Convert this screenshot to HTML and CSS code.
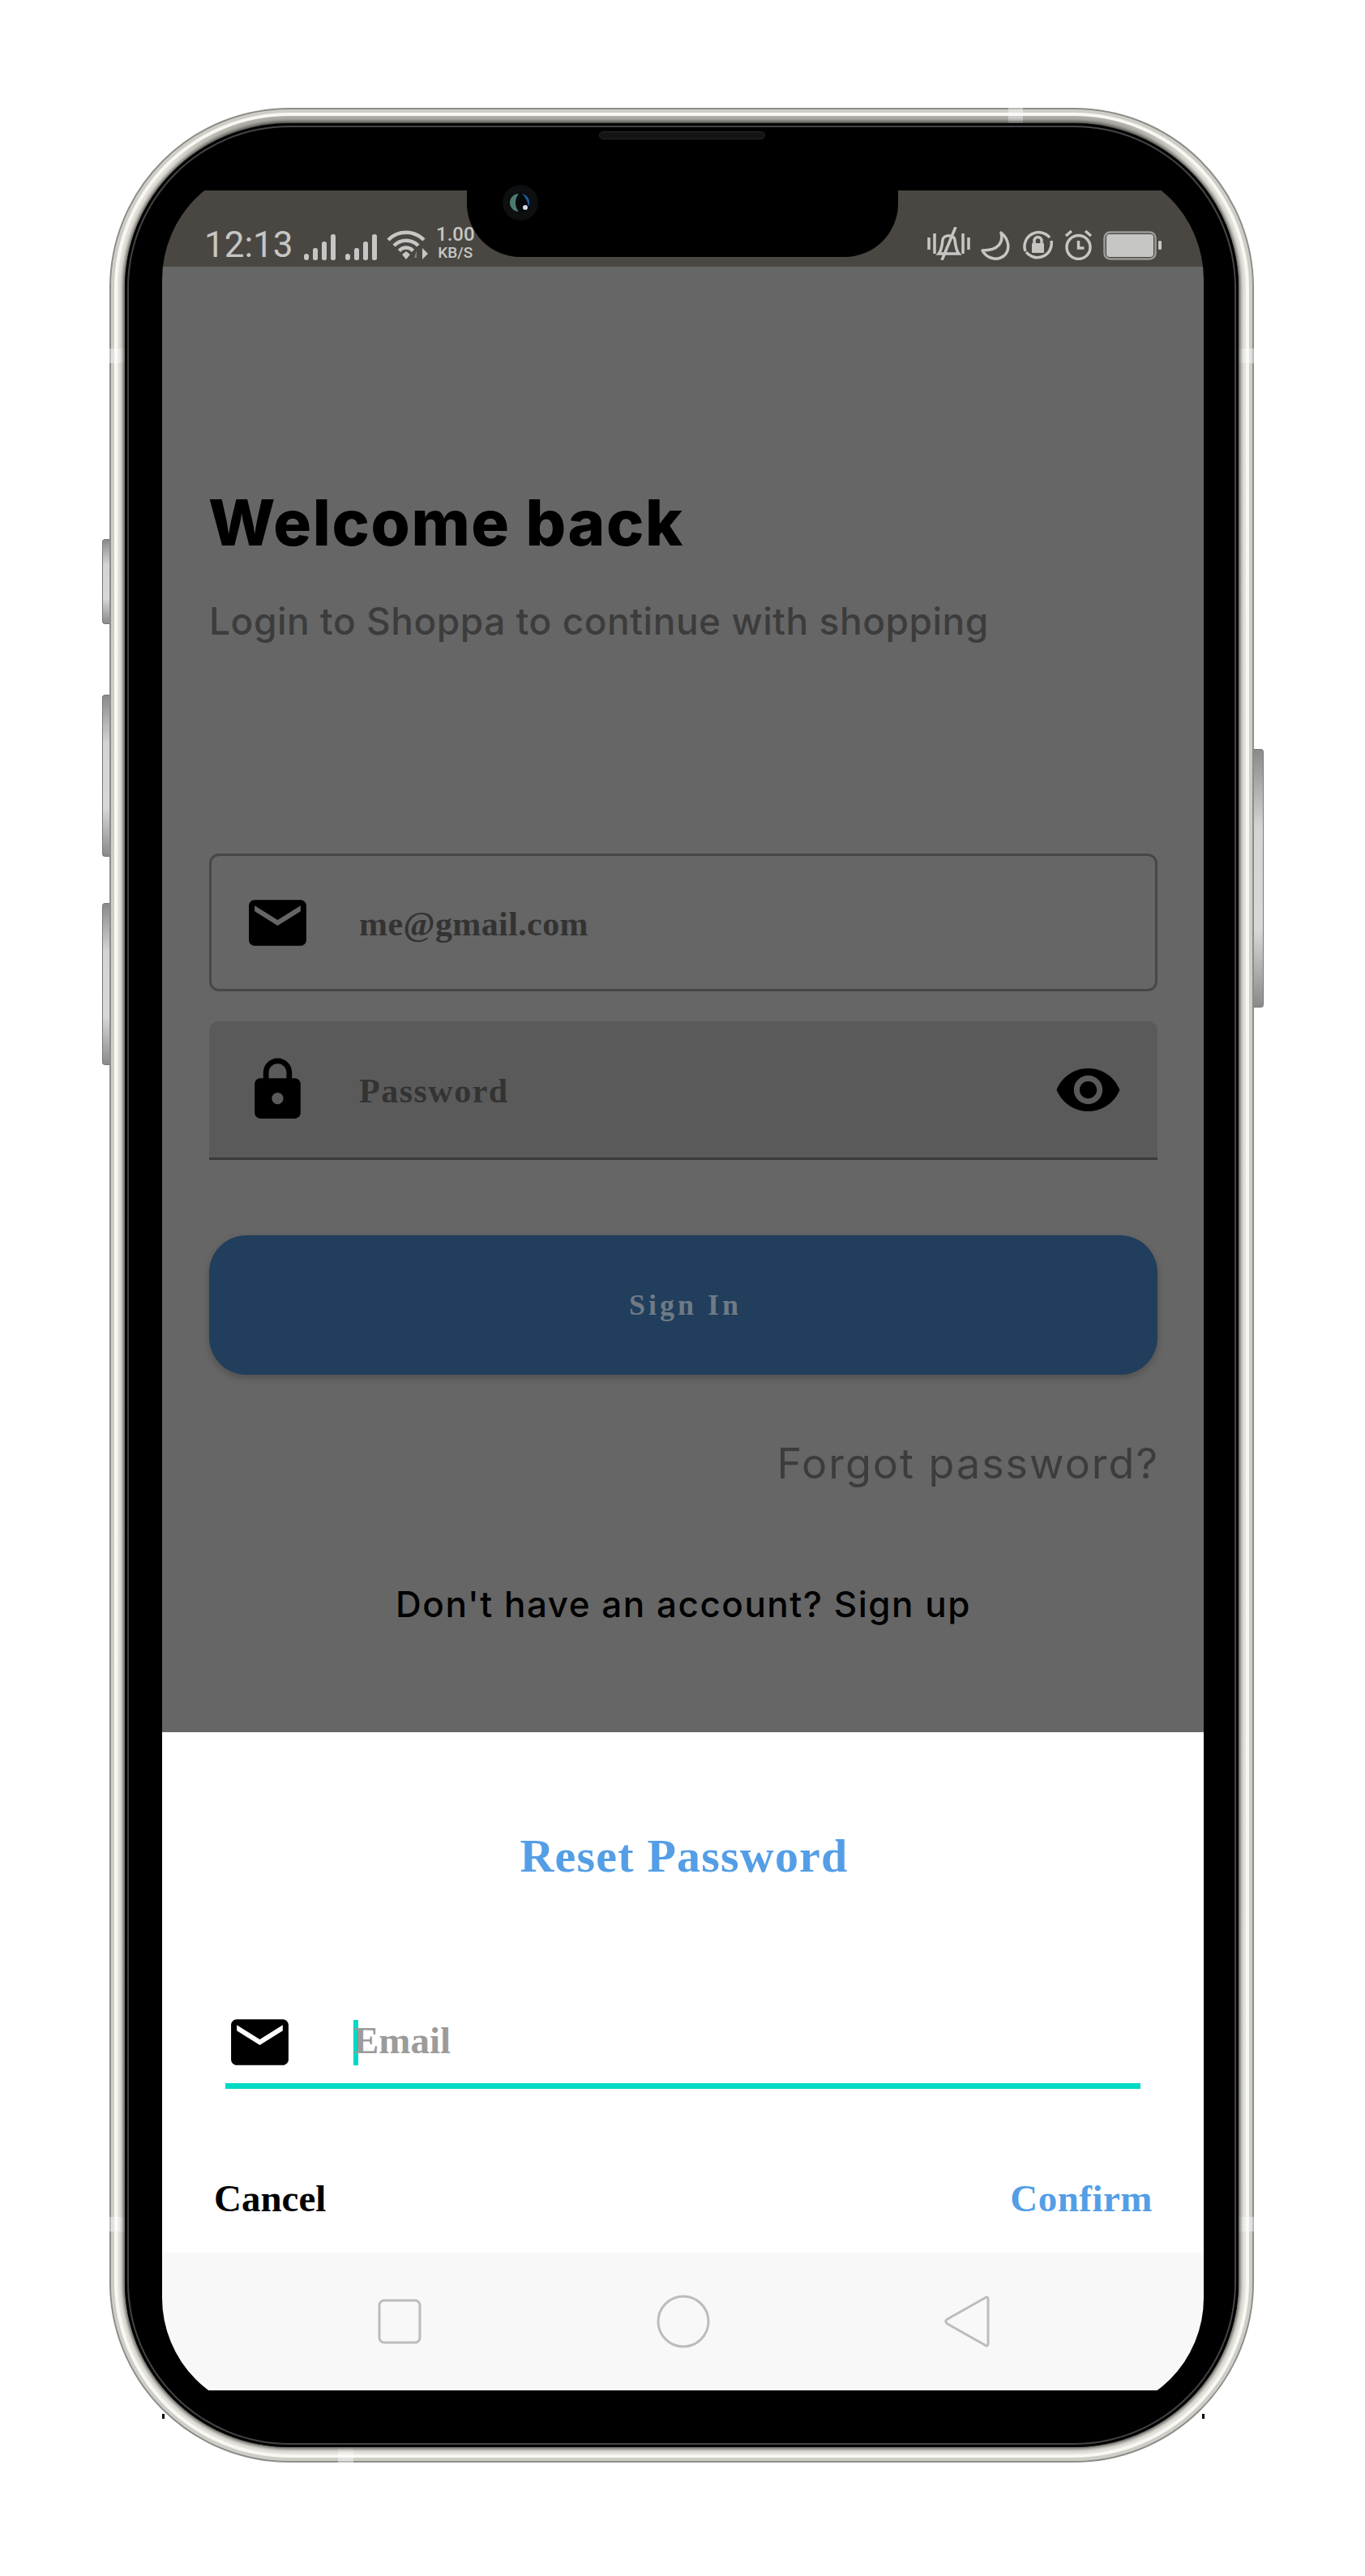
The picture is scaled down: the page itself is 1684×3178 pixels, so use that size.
FILE: index.html
```html
<!DOCTYPE html>
<html>
<head>
  <title>Welcome back</title>
  <link rel="stylesheet" href="styles.css">
</head>
<body>
  <div class="phone">
    <div class="side-btn left-one"></div>
    <div class="side-btn left-two"></div>
    <div class="side-btn left-three"></div>
    <div class="side-btn right-one"></div>

    <div class="band band-top"></div>
    <div class="band band-bottom"></div>
    <div class="band band-side side-l1"></div>
    <div class="band band-side side-r1"></div>
    <div class="band band-side side-l2"></div>
    <div class="band band-side side-r2"></div>

    <div class="speck speck-left"></div>
    <div class="speck speck-right"></div>

    <div class="bezel">
      <div class="speaker"></div>
      <div class="screen">
        <div class="notch">
          <svg class="camera" width="44" height="44" viewBox="0 0 44 44">
            <circle cx="22" cy="22" r="22" fill="#0e0f10"/>
            <circle cx="22" cy="22" r="12" fill="#06090c"/>
            <path d="M20 11a11 11 0 0 0 0 22c-3-4-4-7-4-11s1-7 4-11z" fill="#4d7a70"/>
            <path d="M24 11a11 11 0 0 1 8 16c-1-6-3-11-8-16z" fill="#1d5a94"/>
            <circle cx="28" cy="28" r="3" fill="#d5d8e8"/>
          </svg>
        </div>

        <div class="status-bar">
          <div class="status-group">
            <span class="clock">12:13</span>
            <svg width="39" height="32" viewBox="0 0 39 32"><g fill="#c6c6c4"><rect x="0" y="24" width="6" height="8" rx="3"/><rect x="11" y="17" width="6" height="15" rx="2.5"/><rect x="22" y="9" width="6" height="23" rx="2.5"/><rect x="33" y="0" width="6" height="32" rx="2.5"/></g></svg>
            <svg width="39" height="32" viewBox="0 0 39 32"><g fill="#c6c6c4"><rect x="0" y="24" width="6" height="8" rx="3"/><rect x="11" y="17" width="6" height="15" rx="2.5"/><rect x="22" y="9" width="6" height="23" rx="2.5"/><rect x="33" y="0" width="6" height="32" rx="2.5"/></g></svg>
            <svg width="52" height="38" viewBox="0 0 52 38"><g fill="none" stroke="#c6c6c4" stroke-width="4.500"><path d="M2 13A31 31 0 0 1 46 13"/><path d="M9 20A21 21 0 0 1 39 20"/><path d="M15.500 26.500A11 11 0 0 1 32.500 26.500"/></g><path d="M19 31l5-4 5 4-5 6z" fill="#c6c6c4"/><path d="M44 23l7 7-7 7z" fill="#c6c6c4"/><path d="M37 26v9h-3z" fill="#85837e"/></svg>
            <div class="speed"><span class="speed-num">1.00</span><span class="speed-unit">KB/S</span></div>
          </div>
          <div class="status-group status-right">
            <svg width="53" height="41" viewBox="0 0 53 41"><g fill="none" stroke="#c6c6c4" stroke-width="3.500"><path d="M2 13v15M51 13v15M9 8v25M44 8v25"/><path d="M14 33c4-5 4-10 5-17 1-7 14-7 15 0 1 7 1 12 5 17z"/><path d="M35 0L18 41"/></g></svg>
            <svg width="38" height="36" viewBox="0 0 38 36"><path d="M25 2c3 11-2 22-23 22 5 10 18 13 26 7 9-7 7-21-3-29z" fill="none" stroke="#c6c6c4" stroke-width="3.500" stroke-linejoin="round"/></svg>
            <svg width="39" height="38" viewBox="0 0 39 38"><g fill="none" stroke="#c6c6c4" stroke-width="3.500"><path d="M34 10A17.500 17.500 0 0 0 4 27"/><path d="M5 28a17.500 17.500 0 0 0 31-14"/><path d="M15 17v-3a4.500 4.500 0 0 1 9 0v3"/></g><rect x="12" y="17" width="15" height="12" rx="1" fill="#c6c6c4"/></svg>
            <svg width="35" height="39" viewBox="0 0 35 39"><g fill="none" stroke="#c6c6c4" stroke-width="3.500"><circle cx="17.500" cy="23" r="14.500"/><path d="M17.500 15v9h7"/><path d="M2 9l7-6M33 9l-7-6"/></g></svg>
            <svg width="72" height="36" viewBox="0 0 72 36"><rect x="1.500" y="1.500" width="63" height="33" rx="7" fill="none" stroke="#9c9b98" stroke-width="2.500"/><rect x="4" y="4" width="58" height="28" rx="4" fill="#c6c6c4"/><rect x="68" y="12" width="4" height="11" rx="1.500" fill="#c6c6c4"/></svg>
          </div>
        </div>

        <div class="login">
          <h1 class="login-title">Welcome back</h1>
          <p class="login-sub">Login to Shoppa to continue with shopping</p>

          <div class="field field-outline">
            <svg class="field-icon" width="85" height="85" viewBox="0 0 24 24"><path d="M20 4H4c-1.100 0-2 .9-2 2v12c0 1.100.9 2 2 2h16c1.100 0 2-.9 2-2V6c0-1.100-.9-2-2-2zm0 4l-8 5-8-5V6l8 5 8-5v2z"/></svg>
            <span class="field-text field-email">me@gmail.com</span>
          </div>

          <div class="field field-filled">
            <svg class="field-icon" width="85" height="85" viewBox="0 0 24 24"><path d="M18 8h-1V6c0-2.760-2.240-5-5-5S7 3.240 7 6v2H6c-1.100 0-2 .9-2 2v10c0 1.100.9 2 2 2h12c1.100 0 2-.9 2-2V10c0-1.100-.9-2-2-2zm-6 9c-1.100 0-2-.9-2-2s.9-2 2-2 2 .9 2 2-.9 2-2 2zm3.100-9H8.900V6c0-1.710 1.390-3.100 3.100-3.100 1.710 0 3.100 1.390 3.100 3.100v2z"/></svg>
            <span class="field-text">Password</span>
            <svg class="field-eye" width="85" height="85" viewBox="0 0 24 24"><path d="M12 4.500C7 4.500 2.730 7.610 1 12c1.730 4.390 6 7.500 11 7.500s9.270-3.110 11-7.500c-1.730-4.390-6-7.500-11-7.500zM12 17c-2.760 0-5-2.240-5-5s2.240-5 5-5 5 2.240 5 5-2.240 5-5 5zm0-8c-1.660 0-3 1.340-3 3s1.340 3 3 3 3-1.340 3-3-1.340-3-3-3z"/></svg>
          </div>

          <button class="sign-in" type="button">Sign In</button>
          <p class="forgot">Forgot password?</p>
          <p class="signup">Don't have an account? Sign up</p>
        </div>

        <div class="sheet">
          <h2 class="sheet-title">Reset Password</h2>
          <div class="sheet-input">
            <svg class="field-icon" width="85" height="85" viewBox="0 0 24 24"><path d="M20 4H4c-1.100 0-2 .9-2 2v12c0 1.100.9 2 2 2h16c1.100 0 2-.9 2-2V6c0-1.100-.9-2-2-2zm0 4l-8 5-8-5V6l8 5 8-5v2z"/></svg>
            <span class="caret"></span>
            <span class="placeholder">Email</span>
          </div>
          <div class="sheet-actions">
            <span class="action-cancel">Cancel</span>
            <span class="action-confirm">Confirm</span>
          </div>
        </div>

        <div class="nav-bar">
          <div class="nav-item"><svg width="56" height="56" viewBox="0 0 56 56"><rect x="3" y="2" width="50" height="52" rx="6" fill="none" stroke="#bcbcbc" stroke-width="3"/></svg></div>
          <div class="nav-item"><svg width="68" height="68" viewBox="0 0 68 68"><circle cx="34" cy="34" r="31" fill="none" stroke="#bcbcbc" stroke-width="3"/></svg></div>
          <div class="nav-item"><svg width="58" height="64" viewBox="0 0 58 64"><path d="M55 5v54c0 3-2 4-4 2L5 35c-3-2-3-4 0-6L51 3c2-2 4-1 4 2z" fill="none" stroke="#bcbcbc" stroke-width="3" stroke-linejoin="round"/></svg></div>
        </div>
      </div>
    </div>
  </div>
</body>
</html>
```

FILE: styles.css
```css
html, body {
  margin: 0;
  background: #ffffff;
}
body {
  width: 1684px;
  height: 3178px;
  overflow: hidden;
}
h1, h2, p {
  margin: 0;
}

/* device frame */
.phone {
  position: relative;
  box-sizing: border-box;
  width: 1412px;
  height: 2905px;
  margin: 133px 0 0 135px;
  border: 2px solid #8c8c8a;
  border-radius: 222px;
  padding: 17px;
  background: linear-gradient(#a9a8a2 0, #b4b3ac 20px, #e4e2da 70px, #e6e4dc 100%);
  box-shadow: inset 0 0 0 4px #cfcec6, inset 0 0 0 8px #f8f7f3;
}
.bezel {
  position: relative;
  box-sizing: border-box;
  width: 100%;
  height: 100%;
  padding: 51px 0 0 46px;
  border-radius: 203px;
  background: #000;
  box-shadow: 0 0 5px 2px rgba(0, 0, 0, 0.7), inset 0 0 0 3px #000, inset 0 0 0 5px #444;
}
.speaker {
  position: absolute;
  left: 585px;
  top: 10px;
  width: 205px;
  height: 10px;
  border-radius: 5px;
  background: #141414;
  border: 1px solid #262626;
  box-sizing: border-box;
}
.side-btn {
  position: absolute;
  width: 9px;
  background: linear-gradient(#8a8a8a, #d4d4d2 30%, #d8d8d6 70%, #8a8a8a);
  border: 1px solid #777;
  box-sizing: border-box;
}
.left-one, .left-two, .left-three {
  left: -11px;
  border-right: none;
  border-radius: 4px 0 0 4px;
}
.left-one { top: 530px; height: 105px; }
.left-two { top: 722px; height: 200px; }
.left-three { top: 979px; height: 200px; }
.right-one {
  right: -14px;
  top: 789px;
  width: 12px;
  height: 319px;
  border-left: none;
  border-radius: 0 4px 4px 0;
}
.band {
  position: absolute;
  background: rgba(255, 255, 255, 0.4);
}
.band-top { left: 1107px; top: -2px; width: 18px; height: 24px; }
.band-bottom { left: 280px; bottom: -2px; width: 19px; height: 20px; }
.band-side { width: 22px; height: 18px; }
.side-l1 { left: -2px; top: 295px; }
.side-r1 { right: -2px; top: 295px; }
.side-l2 { left: -2px; top: 2600px; }
.side-r2 { right: -2px; top: 2600px; }
.speck {
  position: absolute;
  top: 2843px;
  width: 3px;
  height: 6px;
  background: #000;
}
.speck-left { left: 63px; }
.speck-right { right: 59px; }

/* screen */
.screen {
  position: relative;
  display: flex;
  flex-direction: column;
  box-sizing: border-box;
  width: 1285px;
  height: 2774px;
  padding-top: 32px;
  border-radius: 142px;
  overflow: hidden;
  background: #000;
  font-family: "Inter", "Liberation Sans", sans-serif;
}
.notch {
  position: absolute;
  left: 376px;
  top: 0;
  width: 532px;
  height: 114px;
  border-radius: 0 0 66px 66px;
  background: #000;
}
.camera {
  position: absolute;
  left: 44px;
  top: 25px;
}
.status-bar {
  display: flex;
  justify-content: space-between;
  align-items: flex-end;
  height: 94px;
  box-sizing: border-box;
  padding: 0 52px 8px 52px;
  background: #4a4742;
}
.status-group {
  display: flex;
  align-items: flex-end;
  gap: 12px;
}
.status-right {
  gap: 13px;
}
.clock {
  width: 111px;
  font-family: "Roboto", sans-serif;
  font-size: 44px;
  line-height: 42px;
  color: #c6c6c4;
  position: relative;
  top: 2px;
}
.speed {
  display: flex;
  flex-direction: column;
  align-items: center;
  margin-left: -3px;
  font-family: "Roboto", sans-serif;
  font-weight: 500;
  color: #c6c6c4;
}
.speed-num {
  font-size: 24px;
  line-height: 25px;
}
.speed-unit {
  font-size: 19px;
  line-height: 19px;
}

/* login form behind the sheet */
.login {
  flex: 1;
  display: flex;
  flex-direction: column;
  padding: 276px 57px 0 58px;
  background: #666666;
}
.login-title {
  margin-left: -1px;
  font-size: 78px;
  line-height: 80px;
  font-weight: 800;
  letter-spacing: 1.6px;
  color: #000;
}
.login-sub {
  margin-top: 56px;
  font-size: 46px;
  line-height: 50px;
  font-weight: 500;
  letter-spacing: 0.55px;
  color: #3c3c3c;
}
.field {
  display: flex;
  align-items: center;
  box-sizing: border-box;
  height: 171px;
  padding: 0 43px 0 42px;
}
.field-outline {
  margin-top: 262px;
  height: 170px;
  border: 3px solid #474747;
  border-radius: 12px;
  padding-left: 39px;
}
.field-filled {
  margin-top: 37px;
  background: #5a5a5a;
  border-bottom: 3px solid #3a3a3a;
  border-radius: 12px 12px 0 0;
}
.field-icon {
  flex: none;
  fill: #000;
}
.field-text {
  position: relative;
  top: 2px;
  margin-left: 58px;
  font-family: "Liberation Serif", serif;
  font-weight: 700;
  font-size: 42px;
  letter-spacing: 1.5px;
  color: #333333;
}
.field-email {
  letter-spacing: 0.4px;
}
.field-eye {
  margin-left: auto;
  fill: #000;
}
.sign-in {
  margin-top: 93px;
  height: 172px;
  padding: 0 0 0 5px;
  border: none;
  border-radius: 46px;
  background: #213e5c;
  box-shadow: 0 4px 10px rgba(0, 0, 0, 0.22);
  color: #6f7a85;
  font-family: "Liberation Serif", serif;
  font-weight: 700;
  font-size: 36px;
  letter-spacing: 4px;
}
.forgot {
  margin: 82px -2px 0 0;
  text-align: right;
  font-size: 52px;
  line-height: 56px;
  letter-spacing: 2px;
  color: #3c3c3c;
}
.signup {
  margin-top: 120px;
  text-align: center;
  font-size: 44px;
  line-height: 50px;
  font-weight: 500;
  letter-spacing: 1.5px;
  color: #000;
}

/* reset password sheet */
.sheet {
  height: 642px;
  box-sizing: border-box;
  padding-top: 123px;
  background: #fff;
  font-family: "Liberation Serif", serif;
  font-weight: 700;
}
.sheet-title {
  margin: 0;
  text-align: center;
  padding-left: 3px;
  font-size: 58px;
  line-height: 60px;
  letter-spacing: 1.2px;
  color: #549ee6;
}
.sheet-input {
  display: flex;
  align-items: center;
  margin: 157px 78px 0;
  padding-bottom: 8px;
  border-bottom: 7px solid #00d9c4;
}
.caret {
  width: 6px;
  height: 56px;
  margin-left: 73px;
  margin-right: -6px;
  background: #00d9c4;
}
.placeholder {
  position: relative;
  top: -3px;
  font-size: 47px;
  color: #9b9b9b;
}
.sheet-actions {
  display: flex;
  justify-content: space-between;
  margin-top: 109px;
  padding: 0 63px 0 64px;
  font-size: 47px;
  line-height: 52px;
}
.action-cancel {
  color: #000;
}
.action-confirm {
  letter-spacing: 0.5px;
  color: #549ee6;
}

/* android nav bar */
.nav-bar {
  display: flex;
  justify-content: center;
  height: 170px;
  margin-bottom: 28px;
  background: #f8f8f8;
}
.nav-item {
  display: flex;
  align-items: center;
  justify-content: center;
  width: 350px;
}
```
